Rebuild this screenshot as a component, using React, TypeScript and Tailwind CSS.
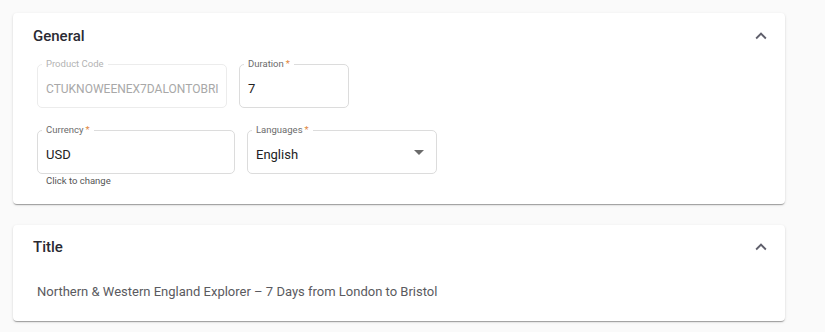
import React from "react";

function ExpandLess() {
  return (
    <svg viewBox="0 0 24 24" className="h-[22px] w-[22px] fill-[#5f5f6b]">
      <path d="M12 8l-6 6 1.41 1.41L12 10.83l4.59 4.58L18 14z" />
    </svg>
  );
}

function Field({
  label,
  value,
  required,
  disabled,
  width,
  select,
}: {
  label: string;
  value: string;
  required?: boolean;
  disabled?: boolean;
  width: string;
  select?: boolean;
}) {
  return (
    <div className={`relative h-[44px] rounded-[5px] border ${disabled ? "border-[#ececec]" : "border-[#dcdcdc]"} ${width}`}>
      <span
        className={`absolute -top-[7px] left-[4px] bg-white px-[4px] text-[9.5px] leading-[12px] ${disabled ? "text-[#b3b3b3]" : "text-[#6b6b6b]"}`}
      >
        {label}
        {required && <span className="ml-[2px] text-[#e0873e]">*</span>}
      </span>
      <div
        className={`flex h-full items-center overflow-hidden whitespace-nowrap pl-[8px] pt-[5px] ${disabled ? "text-[12px] text-[#a8a8a8]" : "text-[13px] text-[#222]"}`}
      >
        {value}
      </div>
      {select && (
        <svg viewBox="0 0 24 24" className="absolute right-[5px] top-[9px] h-[24px] w-[24px] fill-[#6b6b6b]">
          <path d="M7 10l5 5 5-5z" />
        </svg>
      )}
    </div>
  );
}

export default function App() {
  return (
    <div className="min-h-[332px] bg-[#fafafa] pt-[13px] pl-[13px] font-['Roboto',sans-serif]">
      {/* General */}
      <div className="w-[772px] rounded-[4px] bg-white shadow-[0_2px_1px_-1px_rgba(0,0,0,0.2),0_1px_1px_0_rgba(0,0,0,0.14),0_1px_3px_0_rgba(0,0,0,0.12)]">
        <div className="flex h-[46px] items-center justify-between pl-[20px] pr-[13px]">
          <h2 className="text-[15px] font-medium text-[#2a2a33]">General</h2>
          <ExpandLess />
        </div>
        <div className="pl-[24px] pt-[5px] pb-[17px]">
          <div className="flex gap-[12px]">
            <Field label="Product Code" value="CTUKNOWEENEX7DALONTOBRI" disabled width="w-[190px]" />
            <Field label="Duration" value="7" required width="w-[110px]" />
          </div>
          <div className="mt-[22px] flex gap-[12px]">
            <div>
              <Field label="Currency" value="USD" required width="w-[198px]" />
              <div className="mt-[1px] pl-[9px] text-[9.5px] leading-[12px] text-[#555]">Click to change</div>
            </div>
            <Field label="Languages" value="English" required select width="w-[190px]" />
          </div>
        </div>
      </div>

      {/* Title */}
      <div className="mt-[21px] w-[772px] rounded-[4px] bg-white shadow-[0_2px_1px_-1px_rgba(0,0,0,0.2),0_1px_1px_0_rgba(0,0,0,0.14),0_1px_3px_0_rgba(0,0,0,0.12)]">
        <div className="flex h-[44px] items-center justify-between pl-[20px] pr-[13px]">
          <h2 className="text-[15px] font-medium text-[#2a2a33]">Title</h2>
          <ExpandLess />
        </div>
        <div className="pl-[24px] pt-[15px] pb-[21px] text-[13px] leading-[16px] text-[#5a5a60]">
          Northern &amp; Western England Explorer – 7 Days from London to Bristol
        </div>
      </div>
    </div>
  );
}
